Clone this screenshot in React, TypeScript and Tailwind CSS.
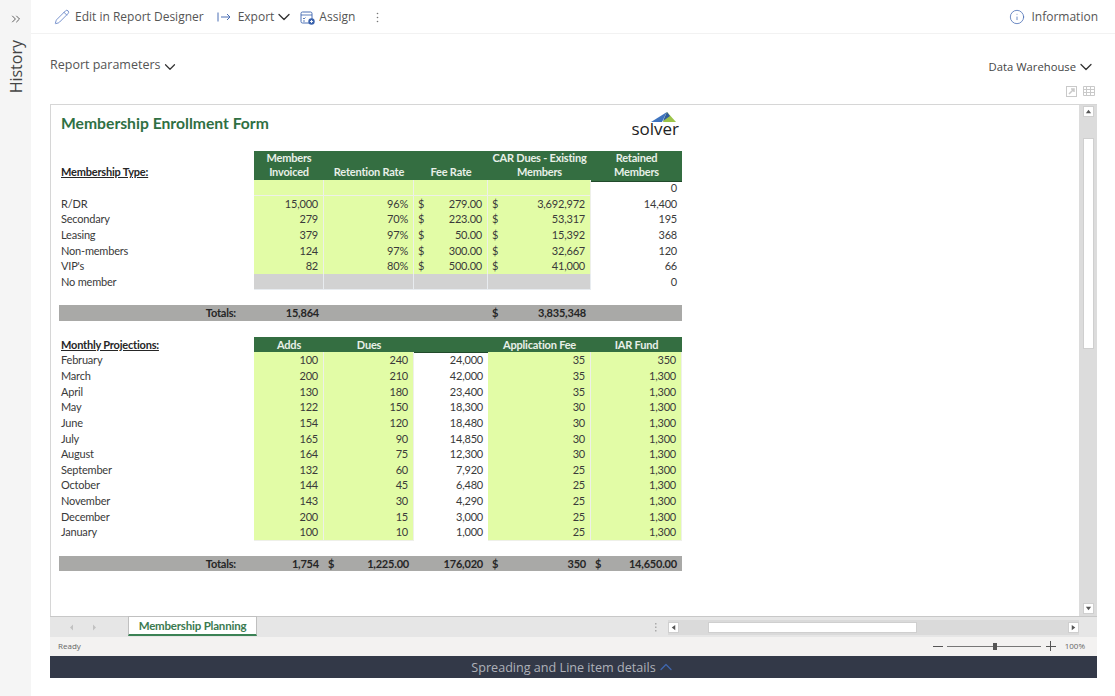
import React from 'react';
import { ChevronDown, ChevronUp, ChevronsRight, Info, Pencil } from 'lucide-react';

const UI_FONT = "font-['Open_Sans',sans-serif]";

type Fill = 'g' | 'x' | 'n';

interface Cell {
  text?: string;
  cur?: string;
  fill?: Fill;
}

const fillClass = (f?: Fill) => {
  if (f === 'g') return 'bg-[#e2fca6] border-r border-b border-[#eef0e8]';
  if (f === 'x') return 'bg-[#d2d2d2] border-r border-b border-[#e8ecf0]';
  return '';
};

const Row = ({ label, cells }: { label?: string; cells: Cell[] }) => (
  <div className="grid grid-cols-[195px_70px_90px_74px_103px_91px] h-[15.67px] w-[623px] leading-[15.67px]">
    <div className="pl-[2px]">{label}</div>
    {cells.map((c, i) => (
      <div key={i} className={`flex justify-between pl-[4px] pr-[5px] ${fillClass(c.fill)}`}>
        <span>{c.cur}</span>
        <span>{c.text}</span>
      </div>
    ))}
  </div>
);

const TotalRow = ({ cells }: { cells: Cell[] }) => (
  <div className="grid grid-cols-[195px_70px_90px_74px_103px_91px] h-[15.67px] w-[623px] leading-[15.67px] bg-[#a9a9a7] font-bold text-[#262626]">
    <div className="text-right pr-[18px]">Totals:</div>
    {cells.map((c, i) => (
      <div key={i} className="flex justify-between pl-[4px] pr-[5px]">
        <span>{c.cur}</span>
        <span>{c.text}</span>
      </div>
    ))}
  </div>
);

const types = [
  ['R/DR', '15,000', '96%', '279.00', '3,692,972', '14,400'],
  ['Secondary', '279', '70%', '223.00', '53,317', '195'],
  ['Leasing', '379', '97%', '50.00', '15,392', '368'],
  ['Non-members', '124', '97%', '300.00', '32,667', '120'],
  ["VIP's", '82', '80%', '500.00', '41,000', '66'],
];

const months = [
  ['February', '100', '240', '24,000', '35', '350'],
  ['March', '200', '210', '42,000', '35', '1,300'],
  ['April', '130', '180', '23,400', '35', '1,300'],
  ['May', '122', '150', '18,300', '30', '1,300'],
  ['June', '154', '120', '18,480', '30', '1,300'],
  ['July', '165', '90', '14,850', '30', '1,300'],
  ['August', '164', '75', '12,300', '30', '1,300'],
  ['September', '132', '60', '7,920', '25', '1,300'],
  ['October', '144', '45', '6,480', '25', '1,300'],
  ['November', '143', '30', '4,290', '25', '1,300'],
  ['December', '200', '15', '3,000', '25', '1,300'],
  ['January', '100', '10', '1,000', '25', '1,300'],
];

const Spacer = () => <div className="h-[15.67px]" />;

const headers = [
  ['Members', 'Invoiced'],
  ['Retention Rate'],
  ['Fee Rate'],
  ['CAR Dues - Existing', 'Members'],
  ['Retained', 'Members'],
];

const Sheet = () => (
  <div className="flex-1 min-w-0 bg-white pl-[8px] font-['Lato',sans-serif] text-[11px] tracking-[-0.2px] text-[#3a3a3a]">
    {/* title + logo */}
    <div className="w-[623px] h-[46px] flex justify-between pl-[2px]">
      <div className="pt-[8px] text-[15.7px] leading-[20px] tracking-normal font-bold text-[#2f7043]">Membership Enrollment Form</div>
      <div className="w-[50px] pt-[6px] mr-[3px]">
        <svg width="30" height="12" viewBox="0 0 30 12" className="ml-[20px] block">
          <polygon points="2,11 18,1 13,11" fill="#3f74bf" />
          <polygon points="18,1 27,11 14,11" fill="#9cc44a" />
          <polygon points="18,1 21,5 14,10" fill="#2f5b9a" />
        </svg>
        <div className="-mt-[1px] font-['Open_Sans',sans-serif] text-[17px] leading-[14px] tracking-normal text-[#222] text-right">solver</div>
      </div>
    </div>

    {/* first table header */}
    <div className="grid grid-cols-[195px_70px_90px_74px_103px_91px] w-[623px] h-[29px]">
      <div className="pl-[2px] pt-[13px] font-bold underline text-[#262626] leading-[15.67px]">Membership Type:</div>
      {headers.map((h, i) => (
        <div key={i} className="bg-[#346e41] text-[#e8f0e8] font-bold text-center leading-[14px] flex flex-col justify-end pb-[2px] border-b border-[#214a2b]">
          {h.map((line) => (
            <span key={line}>{line}</span>
          ))}
        </div>
      ))}
    </div>

    <Row cells={[{ fill: 'g' }, { fill: 'g' }, { fill: 'g' }, { fill: 'g' }, { text: '0' }]} />
    {types.map((r) => (
      <Row
        key={r[0]}
        label={r[0]}
        cells={[
          { text: r[1], fill: 'g' },
          { text: r[2], fill: 'g' },
          { cur: '$', text: r[3], fill: 'g' },
          { cur: '$', text: r[4], fill: 'g' },
          { text: r[5] },
        ]}
      />
    ))}
    <Row label="No member" cells={[{ fill: 'x' }, { fill: 'x' }, { fill: 'x' }, { fill: 'x' }, { text: '0' }]} />
    <Spacer />
    <TotalRow cells={[{ text: '15,864' }, {}, {}, { cur: '$', text: '3,835,348' }, {}]} />
    <Spacer />

    {/* second table header */}
    <div className="grid grid-cols-[195px_70px_90px_74px_103px_91px] w-[623px] h-[15.67px] leading-[15.67px]">
      <div className="pl-[2px] font-bold underline text-[#262626]">Monthly Projections:</div>
      {['Adds', 'Dues', '', 'Application Fee', 'IAR Fund'].map((h, i) => (
        <div key={i} className="bg-[#346e41] text-[#e8f0e8] font-bold text-center border-b border-[#214a2b]">{h}</div>
      ))}
    </div>
    {months.map((r) => (
      <Row
        key={r[0]}
        label={r[0]}
        cells={[
          { text: r[1], fill: 'g' },
          { text: r[2], fill: 'g' },
          { text: r[3] },
          { text: r[4], fill: 'g' },
          { text: r[5], fill: 'g' },
        ]}
      />
    ))}
    <Spacer />
    <TotalRow
      cells={[
        { text: '1,754' },
        { cur: '$', text: '1,225.00' },
        { text: '176,020' },
        { cur: '$', text: '350' },
        { cur: '$', text: '14,650.00' },
      ]}
    />
  </div>
);

const ScrollBtn = ({ dir }: { dir: 'up' | 'down' | 'left' | 'right' }) => {
  const pts = { up: '1,6 4,2 7,6', down: '1,2 4,6 7,2', left: '6,1 2,4 6,7', right: '2,1 6,4 2,7' }[dir];
  return (
    <div className="w-[11px] h-[11px] bg-white border border-[#cfcfcf] flex items-center justify-center shrink-0">
      <svg width="7" height="7" viewBox="0 0 8 8"><polygon points={pts} fill="#555" /></svg>
    </div>
  );
};

export default function App() {
  return (
    <div className={`flex w-[1115px] h-[696px] overflow-hidden bg-white ${UI_FONT}`}>
      {/* history rail */}
      <div className="w-[31px] shrink-0 bg-[#f5f5f5] flex flex-col items-center pt-[12px] text-[#555]">
        <ChevronsRight size={14} strokeWidth={1.6} className="ml-[1px]" />
        <div className="mt-[14px] [writing-mode:vertical-rl] rotate-180 text-[16px] leading-[20px] text-[#444]">History</div>
      </div>

      <div className="flex-1 min-w-0 flex flex-col">
        {/* toolbar */}
        <div className="h-[34px] shrink-0 border-b border-[#f2f2f2] flex items-center pl-[23px] pr-[17px] pt-[1px] text-[12px] text-[#555]">
          <Pencil size={16} strokeWidth={1.2} className="text-[#5577c0]" />
          <span className="ml-[5px]">Edit in Report Designer</span>
          <svg width="14" height="10" viewBox="0 0 14 10" className="ml-[13px] text-[#4a6fb5]" fill="none" stroke="currentColor" strokeWidth="1">
            <path d="M1 0.5v9M4 5h9M10 2l3 3-3 3" />
          </svg>
          <span className="ml-[7px]">Export</span>
          <ChevronDown size={20} strokeWidth={1.6} className="text-[#333]" />
          <svg width="15" height="15" viewBox="0 0 15 15" className="ml-[6px]" fill="none">
            <rect x="1" y="2" width="11" height="11" rx="1.5" stroke="#4a6fb5" strokeWidth="1" />
            <path d="M1 5h11M3 8l1 1 1.500-1.500M3 11h2" stroke="#4a6fb5" strokeWidth="0.9" />
            <circle cx="11.500" cy="11.500" r="3.200" fill="#3b63ad" />
            <path d="M11.500 10v3M10 11.500h3" stroke="#fff" strokeWidth="0.9" />
          </svg>
          <span className="ml-[4px]">Assign</span>
          <svg width="3" height="11" viewBox="0 0 3 11" className="ml-[21px]" fill="#777">
            <circle cx="1.500" cy="1.500" r="0.800" /><circle cx="1.500" cy="5.500" r="0.800" /><circle cx="1.500" cy="9.500" r="0.800" />
          </svg>
          <Info size={16} strokeWidth={1.2} className="ml-auto text-[#4a6fb5]" />
          <span className="ml-[6px]">Information</span>
        </div>

        {/* parameters row */}
        <div className="h-[70px] shrink-0 pl-[19px] pr-[18px] pt-[21px] flex justify-between text-[#555]">
          <div className="flex items-start text-[12.5px] leading-[20px]">
            <span>Report parameters</span>
            <ChevronDown size={18} strokeWidth={1.6} className="mt-[3px] text-[#333]" />
          </div>
          <div className="flex flex-col items-end">
            <div className="flex items-center text-[11.25px] leading-[24px] pr-[1px] text-[#444]">
              <span>Data Warehouse</span>
              <ChevronDown size={20} strokeWidth={1.5} className="text-[#333]" />
            </div>
            <div className="mt-[6px] mr-[2px] flex items-center gap-[6px]">
              <svg width="11" height="11" viewBox="0 0 11 11" fill="none" stroke="#c9c9c9">
                <rect x="0.500" y="0.500" width="10" height="10" />
                <path d="M3 8l5-5M5 3h3v3" strokeWidth="1.500" />
              </svg>
              <svg width="12" height="12" viewBox="0 0 12 12" fill="none" stroke="#c9c9c9">
                <path d="M0.500 1.500h11M0.500 4.500h11M0.500 7.500h11M0.500 10.500h11M3.500 1.500v9M7.500 1.500v9M11.500 1.500v9M0.500 1.500v9" />
              </svg>
            </div>
          </div>
        </div>

        {/* report viewer */}
        <div className="ml-[19px] mr-[18px] h-[574px] shrink-0 flex flex-col">
          <div className="h-[512px] shrink-0 flex border-t border-l border-[#d6d6d6] overflow-hidden">
            <Sheet />
            <div className="w-[18px] shrink-0 bg-[#dcdcdc] flex flex-col items-center pt-[1px] pb-[2px]">
              <ScrollBtn dir="up" />
              <div className="w-[11px] h-[211px] mt-[21px] bg-white border border-[#cfcfcf]" />
              <div className="flex-1" />
              <ScrollBtn dir="down" />
            </div>
          </div>

          {/* sheet tabs */}
          <div className="h-[21px] shrink-0 flex bg-[#e6e6e6] border-t border-[#c8c8c8]">
            <div className="w-[78px] shrink-0 flex items-center pl-[19px] gap-[18px]">
              <svg width="5" height="7" viewBox="0 0 5 7"><polygon points="4,0.500 1,3.500 4,6.500" fill="#c2c2c2" /></svg>
              <svg width="5" height="7" viewBox="0 0 5 7"><polygon points="1,0.500 4,3.500 1,6.500" fill="#c2c2c2" /></svg>
            </div>
            <div className="w-[129px] h-[20px] -mt-[1px] bg-white border-x border-t border-[#c0c0c0] border-b-2 border-b-[#3b8255] text-center text-[11.5px] tracking-[-0.2px] leading-[18px] font-['Lato',sans-serif] font-bold text-[#3b7a50]">
              Membership Planning
            </div>
            <div className="ml-[397px] flex items-center">
              <svg width="3" height="9" viewBox="0 0 3 9" fill="#aaa"><rect x="1" y="0" width="1.500" height="1.500" /><rect x="1" y="3.500" width="1.500" height="1.500" /><rect x="1" y="7" width="1.500" height="1.500" /></svg>
            </div>
            <div className="ml-[11px] flex-1 flex items-center pr-[18px]">
              <div className="flex-1 h-[15px] bg-[#dadada] flex items-center">
                <ScrollBtn dir="left" />
                <div className="ml-[29px] w-[209px] h-[11px] bg-white border border-[#cfcfcf]" />
                <div className="flex-1" />
                <ScrollBtn dir="right" />
              </div>
            </div>
          </div>

          {/* status */}
          <div className="h-[19px] shrink-0 bg-[#f3f2f1] flex items-center pl-[8px] pr-[12px] pb-[1px] text-[8px] text-[#666]">
            <span>Ready</span>
            <div className="ml-auto flex items-center">
              <div className="w-[10px] h-[1px] bg-[#555]" />
              <div className="ml-[4px] w-[94px] h-[1px] bg-[#777] relative">
                <div className="absolute left-[46px] -top-[3px] w-[4px] h-[7px] bg-[#555]" />
              </div>
              <div className="ml-[5px] relative w-[10px] h-[10px]">
                <div className="absolute top-[4.500px] left-0 w-[10px] h-[1px] bg-[#555]" />
                <div className="absolute left-[4.500px] top-0 w-[1px] h-[10px] bg-[#555]" />
              </div>
              <span className="ml-[9px]">100%</span>
            </div>
          </div>

          {/* details bar */}
          <div className="h-[22px] shrink-0 bg-[#333948] flex items-center justify-center pt-[2px] text-[12.6px] text-[#aeb1b9]">
            <span>Spreading and Line item details</span>
            <ChevronUp size={20} strokeWidth={1.6} className="-mt-[3px] text-[#3f66ad]" />
          </div>
        </div>
      </div>
    </div>
  );
}
